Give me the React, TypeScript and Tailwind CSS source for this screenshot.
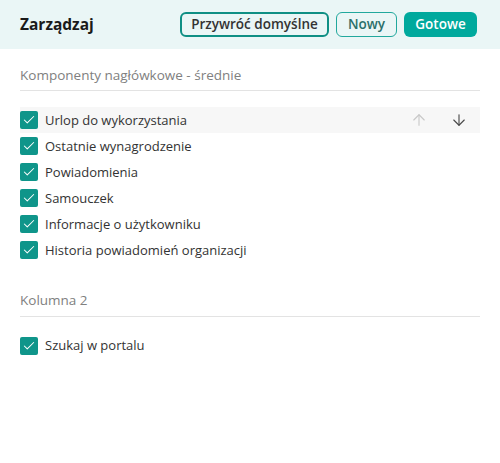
import { ArrowUp, ArrowDown, Check } from 'lucide-react';

type Item = { label: string; active?: boolean };

const sections: { title: string; items: Item[] }[] = [
  {
    title: 'Komponenty nagłówkowe - średnie',
    items: [
      { label: 'Urlop do wykorzystania', active: true },
      { label: 'Ostatnie wynagrodzenie' },
      { label: 'Powiadomienia' },
      { label: 'Samouczek' },
      { label: 'Informacje o użytkowniku' },
      { label: 'Historia powiadomień organizacji' },
    ],
  },
  {
    title: 'Kolumna 2',
    items: [{ label: 'Szukaj w portalu' }],
  },
];

function Row({ item }: { item: Item }) {
  return (
    <div
      className={`flex items-center h-[26px] ${item.active ? 'bg-[#f7f7f7]' : ''}`}
    >
      <span className="w-[18px] h-[18px] rounded-[2px] bg-[#0f958a] flex items-center justify-center">
        <Check size={14} strokeWidth={1.75} className="text-white" />
      </span>
      <span className="ml-[7px] text-[13px] text-[#333]">{item.label}</span>
      {item.active && (
        <div className="ml-auto flex items-center gap-[22px] pr-[12px]">
          <ArrowUp size={18} strokeWidth={1.5} className="text-[#c8c8c8]" />
          <ArrowDown size={18} strokeWidth={1.5} className="text-[#4a4a4a]" />
        </div>
      )}
    </div>
  );
}

export default function App() {
  return (
    <div className="w-[500px] h-[463px] bg-white font-['Open_Sans',sans-serif]">
      <div className="h-[49px] bg-[#eaf6f6] flex items-center px-[20px]">
        <h1 className="text-[15.5px] font-bold text-[#1a1a1a]">Zarządzaj</h1>
        <div className="ml-auto flex items-center gap-[7px] mr-[3px]">
          <button className="h-[25px] w-[149px] rounded-[6px] border-2 border-[#0f8f84] text-[13.5px] font-semibold text-[#333]">
            Przywróć domyślne
          </button>
          <button className="h-[25px] w-[61px] rounded-[6px] border border-[#21a89d] text-[13.5px] font-semibold text-[#2b6f6a]">
            Nowy
          </button>
          <button className="h-[25px] w-[73px] rounded-[6px] bg-[#00a99d] text-[13.5px] font-semibold text-white">
            Gotowe
          </button>
        </div>
      </div>
      <div className="px-[20px] pt-[16px]">
        {sections.map((s) => (
          <div key={s.title} className="mb-[27px]">
            <div className="text-[13.5px] text-[#808080] pb-[5px] border-b border-[#e3e3e3]">
              {s.title}
            </div>
            <div className="pt-[16px] flex flex-col">
              {s.items.map((it) => (
                <Row key={it.label} item={it} />
              ))}
            </div>
          </div>
        ))}
      </div>
    </div>
  );
}
